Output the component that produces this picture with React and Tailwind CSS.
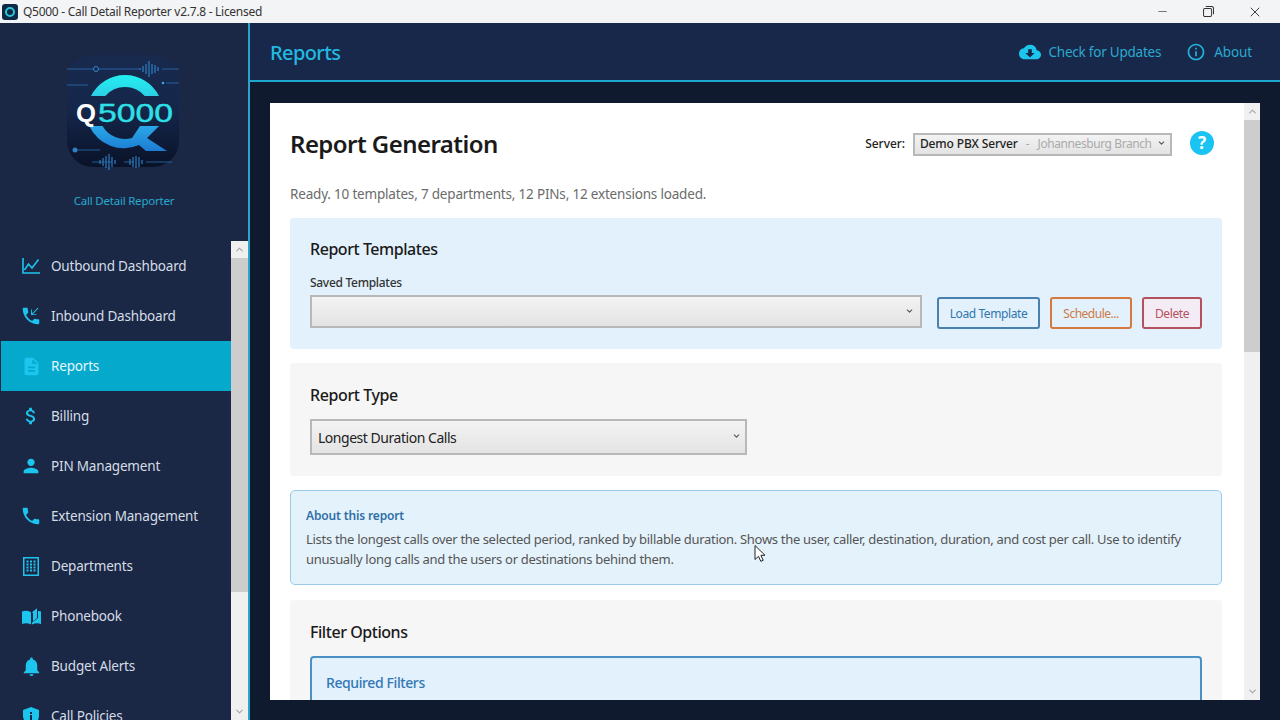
import React from "react";
import { MdPhoneCallback, MdDescription, MdAttachMoney, MdPerson, MdPhone, MdNotifications, MdCloudDownload, MdInfoOutline } from "react-icons/md";
import { ChevronDown, ChevronUp, X, Minus } from "lucide-react";

const font = { fontFamily: '"Noto Sans", "Open Sans", sans-serif' };

function ChartIcon() {
  return (
    <svg viewBox="0 0 18 16" className="w-[18px] h-[16px]" fill="none" stroke="currentColor" strokeWidth="1.6">
      <path d="M1 0v15h17" />
      <path d="M2.500 12 6.500 6l3.500 4L16.500 1.500" />
    </svg>
  );
}
function BuildingIcon() {
  return (
    <svg viewBox="0 0 16 19" className="w-[16px] h-[19px]" fill="currentColor">
      <path fillRule="evenodd" d="M0 0h16v19H0zM1.500 1.500v16h13v-16z" />
      {[3.5, 7, 10.500].map((x) => [3.5, 6.500, 9.500, 12.500].map((y) => <rect key={x + "-" + y} x={x} y={y} width="2" height="2" />))}
    </svg>
  );
}
function ShieldIcon() {
  return (
    <svg viewBox="0 0 16 18" className="w-[16px] h-[18px]" fill="currentColor">
      <path fillRule="evenodd" d="M8 0l8 3v6c0 4.500-3.400 7.800-8 9-4.600-1.200-8-4.500-8-9V3zM7 5v2h2V5zm0 3v5h2V8z" />
    </svg>
  );
}
function BookIcon() {
  return (
    <svg viewBox="0 0 19 17" className="w-[19px] h-[17px]" fill="currentColor">
      <path d="M0 3.500C3 2.300 6 2.500 9 4.200v12.300C6 15 3 14.800 0 16z" />
      <path fillRule="evenodd" d="M10 4.200l5-4v1.500l0 .1 0 0V10l-4 3.300V5zM17 3c.7.100 1.400.300 2 .5V16c-3-1.200-6-1-9 .5V14.600l6-4.600V3z" />
    </svg>
  );
}

const nav = [
  ["Outbound Dashboard", <ChartIcon />],
  ["Inbound Dashboard", <MdPhoneCallback size={22} />],
  ["Reports", <MdDescription size={21} />, true],
  ["Billing", <MdAttachMoney size={22} />],
  ["PIN Management", <MdPerson size={22} />],
  ["Extension Management", <MdPhone size={22} />],
  ["Departments", <BuildingIcon />],
  ["Phonebook", <BookIcon />],
  ["Budget Alerts", <MdNotifications size={23} />],
  ["Call Policies", <ShieldIcon />],
];

function Logo() {
  return (
    <svg viewBox="0 0 116 116" className="w-[116px] h-[116px]">
      <defs>
        <linearGradient id="lg" x1="0" y1="0" x2="0" y2="1">
          <stop offset="0" stopColor="#182a4e" />
          <stop offset="0.5" stopColor="#14264a" />
          <stop offset="1" stopColor="#0a1228" />
        </linearGradient>
        <linearGradient id="qg" x1="0" y1="0" x2="0" y2="1">
          <stop offset="0" stopColor="#2aa8e8" />
          <stop offset="1" stopColor="#1c7cd2" />
        </linearGradient>
        <linearGradient id="qt" x1="0" y1="0" x2="0" y2="1">
          <stop offset="0" stopColor="#22f0f0" />
          <stop offset="1" stopColor="#2ccfe6" />
        </linearGradient>
      </defs>
      <rect x="1" y="1" width="112" height="112" rx="26" fill="url(#lg)" />
      <path d="M1 15h26M33 15h40M96 15h17M1 31h21" stroke="#2a6fb0" strokeWidth="0.8" />
      <circle cx="30" cy="15" r="2.500" fill="none" stroke="#2f8ad0" />
      <path d="M74 14v2M77 12v6M80 10v10M83 7v16M86 10v10M89 11v8M92 13v4" stroke="#2f7fc4" strokeWidth="1.200" />
      <circle cx="97" cy="29" r="1.300" fill="#3aa6e0" />
      <path d="M100 29h13M8 96h26M26 108h20M58 108h10M80 108h26" stroke="#2a6fb0" strokeWidth="0.8" />
      <circle cx="9" cy="96" r="2.500" fill="#2f7fc4" />
      <path d="M34 106v4M37 104v8M40 102v12M43 100v16M46 103v10M49 106v4M64 105v6M67 103v10M70 102v12M73 103v10M76 106v4" stroke="#2f7fc4" strokeWidth="1.200" />
      <path d="M25 42A38 38 0 0 1 93 42H78.700A26 26 0 0 0 39.300 42Z" fill="url(#qt)" />
      <path d="M23.300 72H36.500A26 26 0 0 0 66 84L74 72H93L81 84L101 97H80L73 91A38 38 0 0 1 23.300 72Z" fill="url(#qg)" />
      <text x="10" y="68" fontSize="26" fontWeight="700" fill="#ffffff" textLength="20" lengthAdjust="spacingAndGlyphs" style={{ fontFamily: '"Liberation Sans", sans-serif' }}>Q</text>
      <text x="32" y="68" fontSize="26" fontWeight="400" fill="#2fe0e8" stroke="#2fe0e8" strokeWidth="0.4" textLength="75" lengthAdjust="spacingAndGlyphs" style={{ fontFamily: '"Liberation Sans", sans-serif' }}>5000</text>
    </svg>
  );
}

function Scrollbar({ thumbH, className }) {
  return (
    <div className={"flex flex-col bg-[#f0f0f0] " + className}>
      <div className="h-[17px] shrink-0 flex items-center justify-center text-[#a8a8a8]"><ChevronUp size={11} strokeWidth={2.5} /></div>
      <div className="flex-1 min-h-0">
        <div className="bg-[#cdcdcd]" style={{ height: thumbH }} />
      </div>
      <div className="h-[17px] shrink-0 flex items-center justify-center text-[#a8a8a8]"><ChevronDown size={11} strokeWidth={2.5} /></div>
    </div>
  );
}

function Sel({ children, className, caret = "right-[6px]" }) {
  return (
    <div className={"relative border-2 border-[#b8b8b8] bg-gradient-to-b from-[#f3f3f3] to-[#e3e3e3] flex items-center " + className}>
      {children}
      <ChevronDown size={9} strokeWidth={3} className={"absolute top-1/2 -translate-y-[60%] text-[#555] " + caret} />
    </div>
  );
}

export default function App() {
  return (
    <div style={font} className="relative w-[1280px] h-[720px] overflow-hidden flex flex-col bg-[#0f1a2e]">
      {/* Title bar */}
      <div className="h-[23px] shrink-0 bg-[#f3f4f6] flex items-center text-[#333]">
        <div className="w-[16px] h-[16px] ml-[2px] rounded-[3px] bg-[#0e2a45] flex items-center justify-center">
          <div className="w-[10px] h-[10px] rounded-full border-2 border-[#2bc6d8]" />
        </div>
        <span className="ml-[5px] pt-[1px] text-[12px] tracking-[-0.28px]">Q5000 - Call Detail Reporter v2.7.8 - Licensed</span>
        <div className="ml-auto flex items-center text-[#333]">
          <Minus size={13} className="mr-[34px] text-[#777]" />
          <svg viewBox="0 0 12 12" className="w-[11px] h-[11px] mr-[33px]" fill="none" stroke="currentColor" strokeWidth="1.100">
            <rect x="0.6" y="2.600" width="8.800" height="8.800" rx="1.500" />
            <path d="M3 .6h6.500a2 2 0 0 1 2 2V9" />
          </svg>
          <X size={16} strokeWidth={1.4} className="mr-[17px]" />
        </div>
      </div>

      <div className="flex-1 min-h-0 flex">
        {/* Sidebar */}
        <aside className="w-[250px] shrink-0 bg-[#1a2845] border-r-2 border-[#2aa4c8] flex flex-col">
          <div className="h-[218px] shrink-0 flex flex-col items-center pt-[31px]">
            <Logo />
            <div className="mt-[22px] text-[11.5px] text-[#28a9cf] tracking-[-0.22px]">Call Detail Reporter</div>
          </div>
          <div className="flex-1 min-h-0 flex overflow-hidden">
            <nav className="w-[231px] shrink-0 pl-[1px] overflow-hidden">
              {nav.map(([label, icon, active]) => (
                <div key={label} className={"h-[50px] flex items-center " + (active ? "bg-[#04a9cc]" : "")}>
                  <span className="w-[50px] pl-[10px] flex justify-center text-[#1cc4ee] shrink-0">{icon}</span>
                  <span className={"text-[13.5px] tracking-[-0.18px] " + (active ? "text-[#e4f6fb]" : "text-[#d6dce6]")}>{label}</span>
                </div>
              ))}
            </nav>
            <Scrollbar className="w-[17px]" thumbH={334} />
          </div>
        </aside>

        {/* Right */}
        <div className="flex-1 min-w-0 flex flex-col">
          <header className="h-[59px] shrink-0 bg-[#18284a] border-b-2 border-[#1ea7cc] flex items-center pl-[20px] pr-[28px]">
            <h1 className="pt-[2px] text-[20px] font-medium text-[#22b9e0] tracking-[-0.6px]">Reports</h1>
            <div className="ml-auto flex items-center text-[#2aa9cf] text-[13.5px]">
              <MdCloudDownload size={22} className="text-[#1cc4ee] mr-[7px]" />
              <span className="pt-[2px] tracking-[-0.23px]">Check for Updates</span>
              <MdInfoOutline size={20} className="ml-[25px] mr-[8px] text-[#22b4dc]" />
              <span className="pt-[2px] tracking-[-0.1px]">About</span>
            </div>
          </header>

          <div className="flex-1 min-h-0 pt-[21px] px-[20px] pb-[20px]">
            <div className="h-full flex">
              <main className="w-[974px] bg-white overflow-hidden pl-[20px] pr-[22px] text-[#222]">
                <div className="flex items-center h-[30px] mt-[26px]">
                  <h2 className="text-[24px] font-semibold text-[#1a1a1a] tracking-[-0.55px]">Report Generation</h2>
                  <div className="ml-auto flex items-center mr-[8px]">
                    <span className="text-[12px] font-medium text-[#222] mr-[8px] tracking-[-0.05px]">Server:</span>
                    <Sel className="w-[259px] h-[23px] pl-[5px] text-[12px]" caret="right-[4px]">
                      <span className="font-medium text-[#222] tracking-[-0.15px]">Demo PBX Server</span>
                      <span className="text-[#aaa] ml-[8px]">-</span>
                      <span className="text-[#aaa] ml-[8px] tracking-[-0.42px]">Johannesburg Branch</span>
                    </Sel>
                    <div className="ml-[18px] mb-[2px] w-[24px] h-[24px] rounded-full bg-[#19c3f2] text-white font-bold text-[17px] flex items-center justify-center">?</div>
                  </div>
                </div>
                <p className="mt-[25px] text-[13.5px] text-[#6b6b6b] tracking-[-0.19px] leading-[20px]">Ready. 10 templates, 7 departments, 12 PINs, 12 extensions loaded.</p>

                <section className="mt-[14px] h-[131px] bg-[#e2f1fc] rounded-[4px] px-[20px] pt-[20px]">
                  <h3 className="text-[16px] leading-[22px] font-medium text-[#1a1a1a] tracking-[-0.45px]">Report Templates</h3>
                  <div className="mt-[15px] text-[12px] leading-[16px] font-medium text-[#333] tracking-[-0.3px]">Saved Templates</div>
                  <div className="mt-[4px] flex items-start">
                    <Sel className="w-[612px] h-[33px]" />
                    <button className="mt-[2px] pt-[1px] ml-[15px] w-[103px] h-[32px] border-2 border-[#4a80ad] rounded-[3px] text-[12px] text-[#2f76ad] tracking-[-0.4px]">Load Template</button>
                    <button className="mt-[2px] pt-[1px] ml-[10px] w-[82px] h-[32px] border-2 border-[#d5793f] rounded-[3px] text-[12px] text-[#cf7a45] tracking-[-0.5px]">Schedule...</button>
                    <button className="mt-[2px] pt-[1px] ml-[10px] w-[60px] h-[32px] border-2 border-[#b5505f] rounded-[3px] text-[12px] text-[#b5505f] bg-[#f3ecf5] tracking-[-0.4px]">Delete</button>
                  </div>
                </section>

                <section className="mt-[14px] h-[113px] bg-[#f6f6f6] rounded-[4px] px-[20px] pt-[21px]">
                  <h3 className="text-[16px] leading-[22px] font-medium text-[#1a1a1a] tracking-[-0.4px]">Report Type</h3>
                  <Sel className="mt-[13px] w-[437px] h-[36px] pl-[6px] text-[14px] text-[#222] tracking-[-0.47px]" caret="right-[4px]">Longest Duration Calls</Sel>
                </section>

                <section className="mt-[14px] h-[95px] bg-[#e4f2fc] border border-[#9cc9e8] rounded-[5px] px-[15px] pt-[16px]">
                  <h4 className="text-[12px] leading-[18px] font-semibold text-[#2f6fa8] tracking-[-0.15px]">About this report</h4>
                  <p className="mt-[4px] text-[13px] leading-[20px] text-[#555] tracking-[-0.3px]">Lists the longest calls over the selected period, ranked by billable duration. Shows the user, caller, destination, duration, and cost per call. Use to identify unusually long calls and the users or destinations behind them.</p>
                </section>

                <section className="mt-[15px] h-[200px] bg-[#f6f6f6] rounded-[4px] px-[20px] pt-[21px]">
                  <h3 className="text-[16px] leading-[22px] font-medium text-[#1a1a1a] tracking-[-0.45px]">Filter Options</h3>
                  <div className="mt-[13px] h-[120px] bg-[#e2f1fc] border-2 border-[#4a90c4] rounded-[4px] px-[14px] pt-[15px]">
                    <div className="text-[14px] leading-[20px] font-medium text-[#3377b5] tracking-[-0.4px]">Required Filters</div>
                  </div>
                </section>
              </main>
              <Scrollbar className="w-[16px]" thumbH={232} />
            </div>
          </div>
        </div>
      </div>

      {/* Mouse pointer overlay */}
      <svg viewBox="0 0 12 18" className="absolute left-[754px] top-[544px] w-[12px] h-[19px]" fill="#fff" stroke="#222" strokeWidth="1">
        <path d="M1 1v14l3.500-3.200 2.300 5 2.400-1-2.300-5H11z" />
      </svg>
    </div>
  );
}
